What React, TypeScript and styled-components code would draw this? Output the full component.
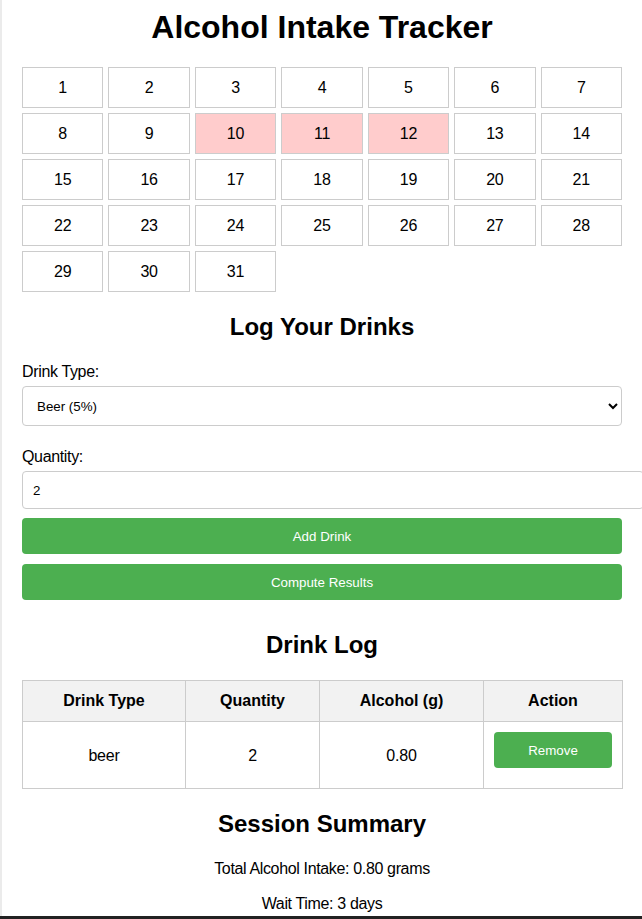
import React from "react";
import styled, { createGlobalStyle } from "styled-components";

const GlobalStyle = createGlobalStyle`
  html { overflow: hidden; }
  body {
    margin: 0;
    border-left: 2px solid #ebebeb;
    background: #fff;
    font-family: "Liberation Sans", Arial, sans-serif;
    color: #000;
  }
`;

const Page = styled.div`
  display: flex;
  flex-direction: column;
  padding: 9px 20px 0;
`;

const Title = styled.h1`
  margin: 0 0 21px;
  font-size: 32px;
  line-height: 37px;
  font-weight: 700;
  text-align: center;
`;

const Calendar = styled.div`
  display: grid;
  grid-template-columns: repeat(7, 1fr);
  gap: 5px;
`;

const Day = styled.div<{ $marked?: boolean }>`
  height: 41px;
  box-sizing: border-box;
  border: 1px solid #ccc;
  background: ${(p) => (p.$marked ? "#ffcccc" : "#fff")};
  display: flex;
  align-items: center;
  justify-content: center;
  font-size: 16px;
  letter-spacing: -0.2px;
`;

const Heading = styled.h2`
  margin: 21px 0 20px;
  font-size: 24px;
  line-height: 28px;
  font-weight: 700;
  text-align: center;
`;

const Label = styled.label`
  display: block;
  font-size: 16px;
  line-height: 18px;
  letter-spacing: -0.35px;
  margin: 2px 0 5px;
`;

const Select = styled.select`
  display: block;
  width: 100%;
  height: 40px;
  box-sizing: border-box;
  padding: 0 10px;
  border: 1px solid #ccc;
  border-radius: 4px;
  background: #fff;
  font-family: "Liberation Sans", Arial, sans-serif;
  font-size: 13.33px;
  color: #000;
  margin-bottom: 20px;
`;

const Input = styled.input`
  display: block;
  width: 100%;
  box-sizing: content-box;
  padding: 0 10px;
  height: 36px;
  border: 1px solid #ccc;
  border-radius: 4px;
  font-family: "Liberation Sans", Arial, sans-serif;
  font-size: 13.33px;
  color: #000;
  margin-bottom: 9px;
`;

const Button = styled.button`
  display: block;
  width: 100%;
  height: 36px;
  border: none;
  border-radius: 4px;
  background: #4caf50;
  color: #fff;
  font-family: "Liberation Sans", Arial, sans-serif;
  font-size: 13.33px;
  margin-bottom: 10px;
  cursor: pointer;
`;

const Table = styled.table`
  width: 100%;
  margin-top: 1px;
  border-collapse: collapse;
  table-layout: fixed;
`;

const Th = styled.th<{ $w: number }>`
  width: ${(p) => p.$w}px;
  box-sizing: border-box;
  border: 1px solid #ccc;
  background: #f2f2f2;
  padding: 10px;
  font-size: 16px;
  line-height: 20px;
  font-weight: 700;
  text-align: center;
`;

const Td = styled.td`
  border: 1px solid #ccc;
  padding: 10px;
  font-size: 16px;
  line-height: 19px;
  letter-spacing: -0.2px;
  text-align: center;
  vertical-align: middle;
`;

const Summary = styled.p`
  margin: 1px 0 15px;
  font-size: 16px;
  line-height: 19px;
  letter-spacing: -0.35px;
  text-align: center;
`;

const BottomBar = styled.div`
  position: fixed;
  left: 0;
  right: 0;
  bottom: 0;
  height: 3px;
  background: #222;
`;

const marked = new Set([10, 11, 12]);
const days = Array.from({ length: 31 }, (_, i) => i + 1);

export default function App() {
  return (
    <>
      <GlobalStyle />
      <Page>
        <Title>Alcohol Intake Tracker</Title>
        <Calendar>
          {days.map((d) => (
            <Day key={d} $marked={marked.has(d)}>
              {d}
            </Day>
          ))}
        </Calendar>

        <Heading>Log Your Drinks</Heading>
        <Label htmlFor="drink">Drink Type:</Label>
        <Select id="drink" defaultValue="beer">
          <option value="beer">Beer (5%)</option>
          <option value="wine">Wine (12%)</option>
          <option value="spirits">Spirits (40%)</option>
        </Select>
        <Label htmlFor="qty">Quantity:</Label>
        <Input id="qty" type="number" defaultValue={2} />
        <Button>Add Drink</Button>
        <Button>Compute Results</Button>

        <Heading>Drink Log</Heading>
        <Table>
          <thead>
            <tr>
              <Th $w={163}>Drink Type</Th>
              <Th $w={134}>Quantity</Th>
              <Th $w={164}>Alcohol (g)</Th>
              <Th $w={139}>Action</Th>
            </tr>
          </thead>
          <tbody>
            <tr>
              <Td>beer</Td>
              <Td>2</Td>
              <Td>0.80</Td>
              <Td>
                <Button>Remove</Button>
              </Td>
            </tr>
          </tbody>
        </Table>

        <Heading>Session Summary</Heading>
        <Summary>Total Alcohol Intake: 0.80 grams</Summary>
        <Summary>Wait Time: 3 days</Summary>
      </Page>
      <BottomBar />
    </>
  );
}
